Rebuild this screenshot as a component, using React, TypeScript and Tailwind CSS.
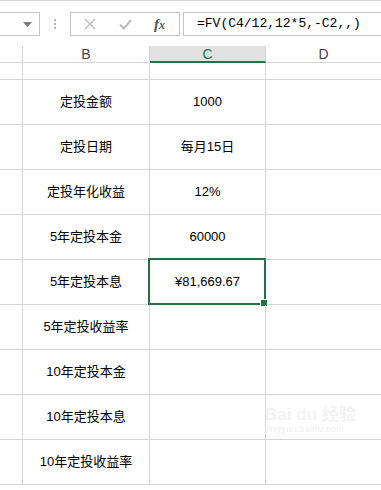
import React from 'react';

const rows = [
  { label: '定投金额', value: '1000' },
  { label: '定投日期', value: '每月15日' },
  { label: '定投年化收益', value: '12%' },
  { label: '5年定投本金', value: '60000' },
  { label: '5年定投本息', value: '¥81,669.67', selected: true },
  { label: '5年定投收益率', value: '' },
  { label: '10年定投本金', value: '' },
  { label: '10年定投本息', value: '' },
  { label: '10年定投收益率', value: '' },
];

const font = "font-['Liberation_Sans','Noto_Sans_CJK_SC',sans-serif]";

const Row = ({ label, value, selected }: { label: string; value: string; selected?: boolean }) => (
  <div className="flex h-[45px] border-b border-[#d4d4d4] text-[13px] text-black">
    <div className="w-[23px] shrink-0 border-r border-[#d4d4d4]" />
    <div className="w-[127px] shrink-0 border-r border-[#d4d4d4] flex items-center justify-center">{label}</div>
    <div className="relative w-[116px] shrink-0 border-r border-[#d4d4d4] flex items-center justify-center">
      {value}
      {selected && (
        <>
          <div className="absolute -left-[2px] -top-[2px] -right-[1px] -bottom-[1px] border-2 border-[#217346]" />
          <div className="absolute -right-[3px] -bottom-[3px] w-[6px] h-[6px] bg-[#217346] border border-white box-content" />
        </>
      )}
    </div>
    <div className="flex-1" />
  </div>
);

export default function App() {
  return (
    <div className={`w-[381px] h-[490px] overflow-hidden bg-white ${font}`}>
      {/* formula bar */}
      <div className="h-[46px] border-t border-[#d4d4d4] flex items-start pt-[11px]">
        <div className="w-[40px] h-[24px] border border-l-0 border-[#c6c6c6] flex items-center justify-end pr-[7px]">
          <svg width="9" height="5" viewBox="0 0 9 5"><path d="M0 0h9L4.5 5z" fill="#7a7a7a" /></svg>
        </div>
        <div className="w-[30px] h-[24px] flex flex-col items-center justify-center gap-[2px]">
          <span className="w-[2px] h-[2px] bg-[#b4b4b4]" />
          <span className="w-[2px] h-[2px] bg-[#b4b4b4]" />
          <span className="w-[2px] h-[2px] bg-[#b4b4b4]" />
        </div>
        <div className="w-[110px] h-[24px] border border-[#c6c6c6] flex items-center">
          <svg className="ml-[13px]" width="12" height="12" viewBox="0 0 12 12">
            <path d="M1 1l10 10M11 1L1 11" stroke="#b9b9b9" strokeWidth="1.3" />
          </svg>
          <svg className="ml-[23px]" width="13" height="11" viewBox="0 0 13 11">
            <path d="M1 5.5l4 4L12 1" stroke="#b9b9b9" strokeWidth="2" fill="none" />
          </svg>
          <span className="ml-[22px] text-[15px] italic font-bold text-[#555] font-['Liberation_Serif',serif] leading-none">
            f<span className="text-[12px]">x</span>
          </span>
        </div>
        <div className="ml-[3px] flex-1 h-[24px] border border-r-0 border-[#c6c6c6] flex items-center pl-[13px] font-['Liberation_Mono','Noto_Sans_CJK_SC',monospace] text-[13px] text-black">
          =FV(C4/12,12*5,-C2,,)
        </div>
      </div>

      {/* column headers */}
      <div className="flex h-[17px] border-b border-[#d4d4d4] text-[14px] text-[#444] leading-none">
        <div className="w-[23px] shrink-0 border-r border-[#d4d4d4]" />
        <div className="w-[127px] shrink-0 border-r border-[#d4d4d4] flex items-center justify-center">B</div>
        <div className="w-[116px] shrink-0 border-r border-[#d4d4d4] bg-[#e1e1e1] border-b-2 border-b-[#217346] flex items-center justify-center text-[#217346] -mb-px">
          C
        </div>
        <div className="flex-1 flex items-center justify-center">D</div>
      </div>

      {/* blank first row */}
      <div className="flex h-[17px] border-b border-[#d4d4d4]">
        <div className="w-[23px] shrink-0 border-r border-[#d4d4d4]" />
        <div className="w-[127px] shrink-0 border-r border-[#d4d4d4]" />
        <div className="w-[116px] shrink-0 border-r border-[#d4d4d4]" />
        <div className="flex-1" />
      </div>

      <div className="relative">
        {rows.map((r) => (
          <Row key={r.label} {...r} />
        ))}
        <div className="absolute left-[265px] top-[326px] w-[110px] text-[#f3f3f3] pointer-events-none whitespace-nowrap">
          <div className="text-[17px] font-bold leading-none">Bai du 经验</div>
          <div className="text-[9px] font-bold">jingyan.baidu.com</div>
        </div>
      </div>
    </div>
  );
}
